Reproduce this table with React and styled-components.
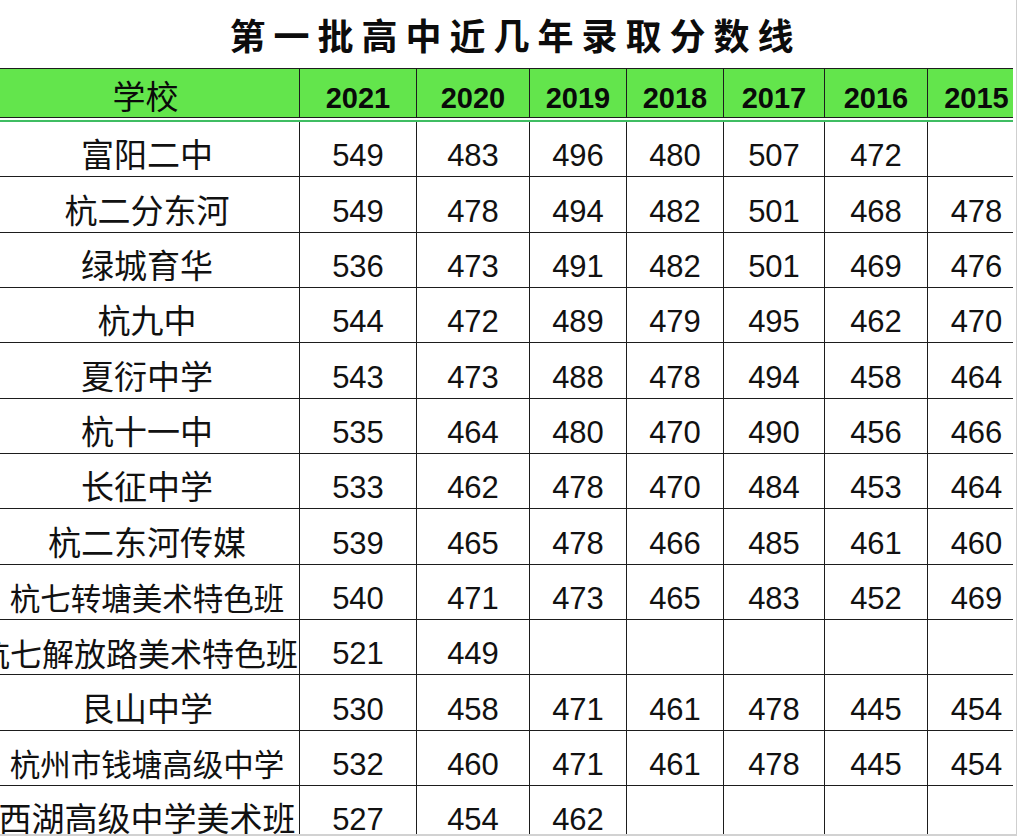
import React from "react";
import styled, { createGlobalStyle } from "styled-components";

const GlobalStyle = createGlobalStyle`
  html, body {
    margin: 0;
    padding: 0;
    background: #ffffff;
    overflow: hidden;
  }
  body {
    font-family: "Liberation Sans", "Noto Sans CJK SC", sans-serif;
    color: #111;
  }
`;

const COLS = "299px 117px 113px 97px 97px 101px 103px 98px";

const Frame = styled.div`
  width: 1017px;
  height: 836px;
  box-sizing: border-box;
  display: flex;
  border-bottom: 2px solid #d2d2d2;
  background: #fff;
`;

const Clip = styled.div`
  flex: none;
  width: 1013px;
  height: 100%;
  overflow: hidden;
  display: flex;
  flex-direction: column;
`;

const EdgeGap = styled.div`
  flex: none;
  width: 3px;
  border-right: 1px solid #cfcfcf;
`;

const Title = styled.h1`
  flex: none;
  margin: 0;
  height: 68px;
  display: flex;
  align-items: center;
  justify-content: center;
  padding-left: 18px;
  box-sizing: border-box;
  font-family: "Noto Sans CJK SC", sans-serif;
  font-weight: 700;
  font-size: 36px;
  letter-spacing: 8px;
  color: #0c0c0c;
`;

const Table = styled.div`
  flex: none;
  width: 1025px;
  display: flex;
  flex-direction: column;
`;

const HeaderRow = styled.div`
  display: grid;
  grid-template-columns: ${COLS};
  height: 50px;
  box-sizing: border-box;
  border-top: 1px solid #1d1d1d;
  border-bottom: 1px solid #1d1d1d;
  background: #63e54c;
`;

const HeaderRule = styled.div`
  height: 2px;
  margin-top: 2px;
  background: #3fbd62;
`;

const HeadCell = styled.div`
  display: flex;
  align-items: flex-end;
  justify-content: center;
  box-sizing: border-box;
  border-left: ${(p) => (p.$first ? "none" : "1px solid #1d1d1d")};
  padding-bottom: ${(p) => (p.$cjk ? "5px" : "4px")};
  padding-right: ${(p) => (p.$cjk ? "8px" : "0")};
  font-family: ${(p) =>
    p.$cjk ? '"Noto Sans CJK SC", sans-serif' : '"Liberation Sans", sans-serif'};
  font-size: ${(p) => (p.$cjk ? "33px" : "29px")};
  font-weight: ${(p) => (p.$cjk ? 400 : 700)};
  line-height: 1;
  color: #0a0a0a;
  white-space: nowrap;
`;

const Row = styled.div`
  display: grid;
  grid-template-columns: ${COLS};
  height: 55.33px;
  box-sizing: border-box;
  border-bottom: 1px solid #1d1d1d;
  background: #fff;
`;

const NameCell = styled.div`
  display: flex;
  align-items: flex-end;
  justify-content: ${(p) => (p.$end ? "flex-end" : "center")};
  box-sizing: border-box;
  overflow: hidden;
  padding-bottom: 6px;
  padding-right: ${(p) => (p.$end ? "1px" : "5px")};
  font-family: "Noto Sans CJK SC", sans-serif;
  font-size: ${(p) => (p.$size ? `${p.$size}px` : "33px")};
  font-weight: 400;
  line-height: 1;
  color: #111;
  white-space: nowrap;
`;

const NumCell = styled.div`
  display: flex;
  align-items: flex-end;
  justify-content: center;
  box-sizing: border-box;
  border-left: 1px solid #1d1d1d;
  padding-bottom: 5px;
  font-family: "Liberation Sans", sans-serif;
  font-size: 31px;
  line-height: 1;
  color: #111;
`;

const years = ["2021", "2020", "2019", "2018", "2017", "2016", "2015"];

const rows = [
  { name: "富阳二中", v: ["549", "483", "496", "480", "507", "472", ""] },
  { name: "杭二分东河", v: ["549", "478", "494", "482", "501", "468", "478"] },
  { name: "绿城育华", v: ["536", "473", "491", "482", "501", "469", "476"] },
  { name: "杭九中", v: ["544", "472", "489", "479", "495", "462", "470"] },
  { name: "夏衍中学", v: ["543", "473", "488", "478", "494", "458", "464"] },
  { name: "杭十一中", v: ["535", "464", "480", "470", "490", "456", "466"] },
  { name: "长征中学", v: ["533", "462", "478", "470", "484", "453", "464"] },
  { name: "杭二东河传媒", v: ["539", "465", "478", "466", "485", "461", "460"] },
  { name: "杭七转塘美术特色班", size: 30.5, v: ["540", "471", "473", "465", "483", "452", "469"] },
  { name: "杭七解放路美术特色班", size: 32, end: true, v: ["521", "449", "", "", "", "", ""] },
  { name: "艮山中学", v: ["530", "458", "471", "461", "478", "445", "454"] },
  { name: "杭州市钱塘高级中学", size: 30.5, v: ["532", "460", "471", "461", "478", "445", "454"] },
  { name: "西湖高级中学美术班", v: ["527", "454", "462", "", "", "", ""] },
];

export default function App() {
  return (
    <>
      <GlobalStyle />
      <Frame>
        <Clip>
          <Title>第一批高中近几年录取分数线</Title>
          <Table>
            <HeaderRow>
              <HeadCell $first $cjk>学校</HeadCell>
              {years.map((y) => (
                <HeadCell key={y}>{y}</HeadCell>
              ))}
            </HeaderRow>
            <HeaderRule />
            {rows.map((r) => (
              <Row key={r.name}>
                <NameCell $size={r.size} $end={r.end}>{r.name}</NameCell>
                {r.v.map((n, i) => (
                  <NumCell key={i}>{n}</NumCell>
                ))}
              </Row>
            ))}
          </Table>
        </Clip>
        <EdgeGap />
      </Frame>
    </>
  );
}
